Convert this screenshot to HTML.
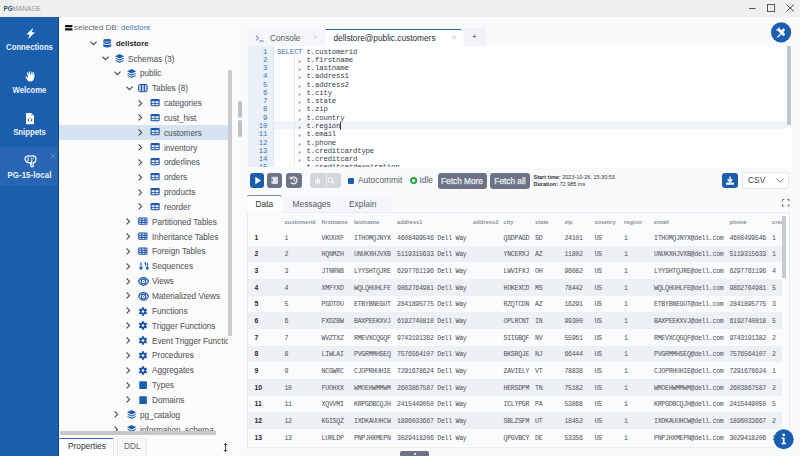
<!DOCTYPE html><html><head><meta charset="utf-8"><style>
*{box-sizing:border-box;margin:0;padding:0}
html,body{width:800px;height:456px;overflow:hidden;background:#fafbfd;font-family:"Liberation Sans",sans-serif;}
.a{position:absolute}
.t{position:absolute;white-space:nowrap}
svg{position:absolute;overflow:visible}
.sans{font-family:"Liberation Sans",sans-serif;letter-spacing:0}
</style></head><body><div class="a" style="left:0;top:0;width:800px;height:17px;background:#efefef"></div>
<div class="t" style="left:3.6px;top:5px;font-size:6.3px;line-height:7px;font-weight:bold;color:#24505f">PG<span style="font-weight:normal;color:#8c9196;letter-spacing:0.12px">MANAGE</span></div>
<svg style="left:0;top:0" width="800" height="17"><line x1="749" y1="8.5" x2="755.5" y2="8.5" stroke="#555" stroke-width="1"/><rect x="767.5" y="4.5" width="7" height="7" fill="none" stroke="#555" stroke-width="1"/><path d="M786.5 4.5L794 11.5M794 4.5L786.5 11.5" stroke="#444" stroke-width="1"/></svg>
<div class="a" style="left:0;top:17px;width:59px;height:439px;background:#1a5fae"></div>
<div class="a" style="left:57.6px;top:17px;width:1.4px;height:439px;background:#123f80"></div>
<div class="a" style="left:0;top:147px;width:57.5px;height:39px;background:#2866b3"></div>
<div class="t" style="left:0;width:59px;text-align:center;top:42.6px;font-size:8.6px;line-height:9px;font-weight:bold;color:#eef3fb;transform:scaleX(0.9)">Connections</div>
<div class="t" style="left:0;width:59px;text-align:center;top:85.5px;font-size:8.6px;line-height:9px;font-weight:bold;color:#eef3fb;transform:scaleX(0.9)">Welcome</div>
<div class="t" style="left:0;width:59px;text-align:center;top:128.3px;font-size:8.6px;line-height:9px;font-weight:bold;color:#eef3fb;transform:scaleX(0.9)">Snippets</div>
<div class="t" style="left:0;width:59px;text-align:center;top:170.8px;font-size:8.7px;line-height:9px;font-weight:bold;color:#eef3fb;letter-spacing:0.1px;transform:scaleX(0.9)">PG-15-local</div>
<svg style="left:25.5px;top:27.5px" width="9" height="11" viewBox="0 0 9 11"><path d="M6.6 0.4 Q7.2 0.2 7 0.9 L5.4 4.3 L8 4.3 Q8.7 4.4 8.2 5 L2.6 10.5 Q2 10.9 2.2 10.2 L3.7 6.6 L1 6.6 Q0.3 6.5 0.8 5.9 Z" fill="#fff"/></svg>
<svg style="left:24.8px;top:71px" width="10" height="10.5" viewBox="0 0 10 10.5"><path d="M1.2 5.2 Q0.4 4.8 0.3 5.6 L2.6 9.4 Q3.4 10.4 5 10.4 L6.6 10.4 Q8 10.2 8.5 8.8 L9.8 4.2 Q9.8 3.3 9 3.5 L8.3 5.6 L9 1.8 Q9 0.9 8.1 1.1 L7.2 4.5 L7.4 1 Q7.2 0.2 6.5 0.5 L5.9 4.6 L4.6 0.6 Q4.2 -0.1 3.6 0.5 L4.2 4.6 L2.8 1.5 Q2.3 0.9 1.8 1.5 L2.9 5.8 L2.2 7 Z" fill="#fff"/></svg>
<svg style="left:25.8px;top:112.6px" width="8" height="11.3" viewBox="0 0 8 11.3"><path d="M0 1 Q0 0 1 0 L5 0 L8 3 L8 10.3 Q8 11.3 7 11.3 L1 11.3 Q0 11.3 0 10.3 Z" fill="#fff"/><path d="M5 0 L5 3 L8 3" fill="#c9d8ee"/><path d="M3.2 5.4 L2 6.9 L3.2 8.4 M4.8 5.4 L6 6.9 L4.8 8.4" stroke="#174a8c" stroke-width="1" fill="none"/></svg>
<svg style="left:23.8px;top:155.4px" width="13" height="12.5" viewBox="0 0 13 12.5"><path d="M1.4 2.2 Q2.6 0.6 5.2 0.9 Q6.5 1.2 7 1 Q9.8 0.4 11.4 1.8 Q12.6 3.2 11.7 5.8 Q11.2 6.8 10.8 7.3 Q10 7.9 9.3 7.6 L9.2 10.6 Q8.9 12 7.8 11.8 Q6.9 11.6 6.7 10.4 L6.5 7.6 Q4.6 8.3 3.2 7.3 Q1.6 6.3 1.1 4.4 Q0.9 3 1.4 2.2 Z" fill="none" stroke="#fff" stroke-width="1.25"/><path d="M4.3 2.3 L4 6.5 M7 2.5 Q8.2 3 7.8 4.6 L7.6 9.8" stroke="#fff" stroke-width="1" fill="none"/><circle cx="9.4" cy="3.3" r="0.6" fill="#fff"/></svg>
<svg style="left:49.5px;top:152.5px" width="6" height="6"><path d="M0.5 0.5L5.3 5.3M5.3 0.5L0.5 5.3" stroke="#6f98cc" stroke-width="0.8"/></svg>
<div class="a" style="left:59px;top:17px;width:184px;height:421px;background:#fbfbfc"></div>
<div class="t" style="left:74px;top:22.5px;font-size:7.9px;line-height:9px;color:#656a74">selected DB: <span style="color:#4a78bd">dellstore</span></div>
<svg style="left:65px;top:24.5px" width="8" height="6"><rect x="0" y="0" width="7.5" height="2.2" rx="0.6" fill="#111"/><rect x="0" y="3.3" width="7.5" height="2.2" rx="0.6" fill="#111"/></svg>
<div class="a" style="left:59px;top:125px;width:169px;height:15px;background:#d6e3f0"></div>
<div class="a" style="left:59px;top:17px;width:169px;height:414.6px;overflow:hidden"><svg style="margin-left:-59px;margin-top:-17px;left:89.50px;top:41.40px" width="7" height="5"><path d="M0.4 0.6L3.5 3.7L6.6 0.6" stroke="#45484d" stroke-width="1.1" fill="none"/></svg><svg style="margin-left:-59px;margin-top:-17px;left:103.00px;top:39.40px" width="9" height="9" viewBox="0 0 9 9"><ellipse cx="4.2" cy="1.4" rx="4" ry="1.4" fill="#1b5eb0"/><path d="M0.2 2.4 Q4.2 4.4 8.2 2.4 L8.2 4 Q4.2 6 0.2 4 Z" fill="#1b5eb0"/><path d="M0.2 5 Q4.2 7 8.2 5 L8.2 7.2 Q4.2 9.6 0.2 7.2 Z" fill="#1b5eb0"/></svg><div class="t" style="margin-left:-59px;margin-top:-17px;left:116px;top:39.00px;font-size:7.8px;line-height:10px;font-weight:bold;color:#1d1f24">dellstore</div><svg style="margin-left:-59px;margin-top:-17px;left:101.50px;top:56.24px" width="7" height="5"><path d="M0.4 0.6L3.5 3.7L6.6 0.6" stroke="#45484d" stroke-width="1.1" fill="none"/></svg><svg style="margin-left:-59px;margin-top:-17px;left:115.00px;top:54.24px" width="10" height="9" viewBox="0 0 10 9"><path d="M4.6 0 L9.2 2.2 L4.6 4.4 L0 2.2 Z" fill="#1b5eb0"/><path d="M1.2 3.9 L4.6 5.5 L8 3.9 L9.2 4.5 L4.6 6.7 L0 4.5 Z" fill="#1b5eb0"/><path d="M1.2 6.2 L4.6 7.8 L8 6.2 L9.2 6.8 L4.6 9 L0 6.8 Z" fill="#1b5eb0"/></svg><div class="t" style="margin-left:-59px;margin-top:-17px;left:128px;top:54.54px;font-size:8.2px;line-height:10px;color:#585b61;-webkit-text-stroke:0.08px #585b61">Schemas (3)</div><svg style="margin-left:-59px;margin-top:-17px;left:113.50px;top:71.08px" width="7" height="5"><path d="M0.4 0.6L3.5 3.7L6.6 0.6" stroke="#45484d" stroke-width="1.1" fill="none"/></svg><svg style="margin-left:-59px;margin-top:-17px;left:127.00px;top:69.08px" width="10" height="9" viewBox="0 0 10 9"><path d="M4.6 0 L9.2 2.2 L4.6 4.4 L0 2.2 Z" fill="#1b5eb0"/><path d="M1.2 3.9 L4.6 5.5 L8 3.9 L9.2 4.5 L4.6 6.7 L0 4.5 Z" fill="#1b5eb0"/><path d="M1.2 6.2 L4.6 7.8 L8 6.2 L9.2 6.8 L4.6 9 L0 6.8 Z" fill="#1b5eb0"/></svg><div class="t" style="margin-left:-59px;margin-top:-17px;left:140px;top:69.38px;font-size:8.2px;line-height:10px;color:#585b61;-webkit-text-stroke:0.08px #585b61">public</div><svg style="margin-left:-59px;margin-top:-17px;left:125.50px;top:85.92px" width="7" height="5"><path d="M0.4 0.6L3.5 3.7L6.6 0.6" stroke="#45484d" stroke-width="1.1" fill="none"/></svg><svg style="margin-left:-59px;margin-top:-17px;left:139.00px;top:83.92px" width="10" height="9" viewBox="0 0 10 9"><rect x="-0.4" y="0.5" width="8.6" height="7.2" rx="1.2" fill="#b3cbef" stroke="#2a5aa6" stroke-width="1"/><path d="M2.55 0.8V7.4M5.35 0.8V7.4" stroke="#1d4f9c" stroke-width="1"/></svg><div class="t" style="margin-left:-59px;margin-top:-17px;left:152px;top:84.22px;font-size:8.2px;line-height:10px;color:#585b61;-webkit-text-stroke:0.08px #585b61">Tables (8)</div><svg style="margin-left:-59px;margin-top:-17px;left:138.00px;top:99.56px" width="5" height="8"><path d="M0.6 0.5L3.6 3.4L0.6 6.3" stroke="#45484d" stroke-width="1.05" fill="none"/></svg><svg style="margin-left:-59px;margin-top:-17px;left:151.00px;top:98.76px" width="10" height="8" viewBox="0 0 10 8"><rect x="-0.5" y="0" width="9.2" height="7.2" rx="1.1" fill="#1d56a8"/><g fill="#e4edf9"><rect x="0.6" y="2.2" width="3.1" height="1.8"/><rect x="4.5" y="2.2" width="3.1" height="1.8"/><rect x="0.6" y="4.8" width="3.1" height="1.4"/><rect x="4.5" y="4.8" width="3.1" height="1.4"/></g></svg><div class="t" style="margin-left:-59px;margin-top:-17px;left:164px;top:99.06px;font-size:8.2px;line-height:10px;color:#585b61;-webkit-text-stroke:0.08px #585b61">categories</div><svg style="margin-left:-59px;margin-top:-17px;left:138.00px;top:114.40px" width="5" height="8"><path d="M0.6 0.5L3.6 3.4L0.6 6.3" stroke="#45484d" stroke-width="1.05" fill="none"/></svg><svg style="margin-left:-59px;margin-top:-17px;left:151.00px;top:113.60px" width="10" height="8" viewBox="0 0 10 8"><rect x="-0.5" y="0" width="9.2" height="7.2" rx="1.1" fill="#1d56a8"/><g fill="#e4edf9"><rect x="0.6" y="2.2" width="3.1" height="1.8"/><rect x="4.5" y="2.2" width="3.1" height="1.8"/><rect x="0.6" y="4.8" width="3.1" height="1.4"/><rect x="4.5" y="4.8" width="3.1" height="1.4"/></g></svg><div class="t" style="margin-left:-59px;margin-top:-17px;left:164px;top:113.90px;font-size:8.2px;line-height:10px;color:#585b61;-webkit-text-stroke:0.08px #585b61">cust_hist</div><svg style="margin-left:-59px;margin-top:-17px;left:138.00px;top:129.24px" width="5" height="8"><path d="M0.6 0.5L3.6 3.4L0.6 6.3" stroke="#45484d" stroke-width="1.05" fill="none"/></svg><svg style="margin-left:-59px;margin-top:-17px;left:151.00px;top:128.44px" width="10" height="8" viewBox="0 0 10 8"><rect x="-0.5" y="0" width="9.2" height="7.2" rx="1.1" fill="#1d56a8"/><g fill="#e4edf9"><rect x="0.6" y="2.2" width="3.1" height="1.8"/><rect x="4.5" y="2.2" width="3.1" height="1.8"/><rect x="0.6" y="4.8" width="3.1" height="1.4"/><rect x="4.5" y="4.8" width="3.1" height="1.4"/></g></svg><div class="t" style="margin-left:-59px;margin-top:-17px;left:164px;top:128.74px;font-size:8.2px;line-height:10px;color:#585b61;-webkit-text-stroke:0.08px #585b61">customers</div><svg style="margin-left:-59px;margin-top:-17px;left:138.00px;top:144.08px" width="5" height="8"><path d="M0.6 0.5L3.6 3.4L0.6 6.3" stroke="#45484d" stroke-width="1.05" fill="none"/></svg><svg style="margin-left:-59px;margin-top:-17px;left:151.00px;top:143.28px" width="10" height="8" viewBox="0 0 10 8"><rect x="-0.5" y="0" width="9.2" height="7.2" rx="1.1" fill="#1d56a8"/><g fill="#e4edf9"><rect x="0.6" y="2.2" width="3.1" height="1.8"/><rect x="4.5" y="2.2" width="3.1" height="1.8"/><rect x="0.6" y="4.8" width="3.1" height="1.4"/><rect x="4.5" y="4.8" width="3.1" height="1.4"/></g></svg><div class="t" style="margin-left:-59px;margin-top:-17px;left:164px;top:143.58px;font-size:8.2px;line-height:10px;color:#585b61;-webkit-text-stroke:0.08px #585b61">inventory</div><svg style="margin-left:-59px;margin-top:-17px;left:138.00px;top:158.92px" width="5" height="8"><path d="M0.6 0.5L3.6 3.4L0.6 6.3" stroke="#45484d" stroke-width="1.05" fill="none"/></svg><svg style="margin-left:-59px;margin-top:-17px;left:151.00px;top:158.12px" width="10" height="8" viewBox="0 0 10 8"><rect x="-0.5" y="0" width="9.2" height="7.2" rx="1.1" fill="#1d56a8"/><g fill="#e4edf9"><rect x="0.6" y="2.2" width="3.1" height="1.8"/><rect x="4.5" y="2.2" width="3.1" height="1.8"/><rect x="0.6" y="4.8" width="3.1" height="1.4"/><rect x="4.5" y="4.8" width="3.1" height="1.4"/></g></svg><div class="t" style="margin-left:-59px;margin-top:-17px;left:164px;top:158.42px;font-size:8.2px;line-height:10px;color:#585b61;-webkit-text-stroke:0.08px #585b61">orderlines</div><svg style="margin-left:-59px;margin-top:-17px;left:138.00px;top:173.76px" width="5" height="8"><path d="M0.6 0.5L3.6 3.4L0.6 6.3" stroke="#45484d" stroke-width="1.05" fill="none"/></svg><svg style="margin-left:-59px;margin-top:-17px;left:151.00px;top:172.96px" width="10" height="8" viewBox="0 0 10 8"><rect x="-0.5" y="0" width="9.2" height="7.2" rx="1.1" fill="#1d56a8"/><g fill="#e4edf9"><rect x="0.6" y="2.2" width="3.1" height="1.8"/><rect x="4.5" y="2.2" width="3.1" height="1.8"/><rect x="0.6" y="4.8" width="3.1" height="1.4"/><rect x="4.5" y="4.8" width="3.1" height="1.4"/></g></svg><div class="t" style="margin-left:-59px;margin-top:-17px;left:164px;top:173.26px;font-size:8.2px;line-height:10px;color:#585b61;-webkit-text-stroke:0.08px #585b61">orders</div><svg style="margin-left:-59px;margin-top:-17px;left:138.00px;top:188.60px" width="5" height="8"><path d="M0.6 0.5L3.6 3.4L0.6 6.3" stroke="#45484d" stroke-width="1.05" fill="none"/></svg><svg style="margin-left:-59px;margin-top:-17px;left:151.00px;top:187.80px" width="10" height="8" viewBox="0 0 10 8"><rect x="-0.5" y="0" width="9.2" height="7.2" rx="1.1" fill="#1d56a8"/><g fill="#e4edf9"><rect x="0.6" y="2.2" width="3.1" height="1.8"/><rect x="4.5" y="2.2" width="3.1" height="1.8"/><rect x="0.6" y="4.8" width="3.1" height="1.4"/><rect x="4.5" y="4.8" width="3.1" height="1.4"/></g></svg><div class="t" style="margin-left:-59px;margin-top:-17px;left:164px;top:188.10px;font-size:8.2px;line-height:10px;color:#585b61;-webkit-text-stroke:0.08px #585b61">products</div><svg style="margin-left:-59px;margin-top:-17px;left:138.00px;top:203.44px" width="5" height="8"><path d="M0.6 0.5L3.6 3.4L0.6 6.3" stroke="#45484d" stroke-width="1.05" fill="none"/></svg><svg style="margin-left:-59px;margin-top:-17px;left:151.00px;top:202.64px" width="10" height="8" viewBox="0 0 10 8"><rect x="-0.5" y="0" width="9.2" height="7.2" rx="1.1" fill="#1d56a8"/><g fill="#e4edf9"><rect x="0.6" y="2.2" width="3.1" height="1.8"/><rect x="4.5" y="2.2" width="3.1" height="1.8"/><rect x="0.6" y="4.8" width="3.1" height="1.4"/><rect x="4.5" y="4.8" width="3.1" height="1.4"/></g></svg><div class="t" style="margin-left:-59px;margin-top:-17px;left:164px;top:202.94px;font-size:8.2px;line-height:10px;color:#585b61;-webkit-text-stroke:0.08px #585b61">reorder</div><svg style="margin-left:-59px;margin-top:-17px;left:126.00px;top:218.28px" width="5" height="8"><path d="M0.6 0.5L3.6 3.4L0.6 6.3" stroke="#45484d" stroke-width="1.05" fill="none"/></svg><svg style="margin-left:-59px;margin-top:-17px;left:139.00px;top:217.48px" width="10" height="9" viewBox="0 0 10 9"><rect x="-0.8" y="0.4" width="9.3" height="7.4" rx="1" fill="#1d56a8"/><g fill="#c4d7f2"><rect x="0.2" y="1.4" width="2.1" height="1.4"/><rect x="3.3" y="1.4" width="2.1" height="1.4"/><rect x="6.4" y="1.4" width="1.2" height="1.4"/><rect x="0.2" y="3.7" width="2.1" height="1.4"/><rect x="3.3" y="3.7" width="2.1" height="1.4"/><rect x="6.4" y="3.7" width="1.2" height="1.4"/><rect x="0.2" y="6" width="2.1" height="1"/><rect x="3.3" y="6" width="2.1" height="1"/><rect x="6.4" y="6" width="1.2" height="1"/></g></svg><div class="t" style="margin-left:-59px;margin-top:-17px;left:152px;top:217.78px;font-size:8.2px;line-height:10px;color:#585b61;-webkit-text-stroke:0.08px #585b61">Partitioned Tables</div><svg style="margin-left:-59px;margin-top:-17px;left:126.00px;top:233.12px" width="5" height="8"><path d="M0.6 0.5L3.6 3.4L0.6 6.3" stroke="#45484d" stroke-width="1.05" fill="none"/></svg><svg style="margin-left:-59px;margin-top:-17px;left:139.00px;top:232.32px" width="10" height="9" viewBox="0 0 10 9"><rect x="-0.8" y="0.4" width="9.3" height="7.4" rx="1" fill="#1d56a8"/><g fill="#c4d7f2"><rect x="0.2" y="1.4" width="2.1" height="1.4"/><rect x="3.3" y="1.4" width="2.1" height="1.4"/><rect x="6.4" y="1.4" width="1.2" height="1.4"/><rect x="0.2" y="3.7" width="2.1" height="1.4"/><rect x="3.3" y="3.7" width="2.1" height="1.4"/><rect x="6.4" y="3.7" width="1.2" height="1.4"/><rect x="0.2" y="6" width="2.1" height="1"/><rect x="3.3" y="6" width="2.1" height="1"/><rect x="6.4" y="6" width="1.2" height="1"/></g></svg><div class="t" style="margin-left:-59px;margin-top:-17px;left:152px;top:232.62px;font-size:8.2px;line-height:10px;color:#585b61;-webkit-text-stroke:0.08px #585b61">Inheritance Tables</div><svg style="margin-left:-59px;margin-top:-17px;left:126.00px;top:247.96px" width="5" height="8"><path d="M0.6 0.5L3.6 3.4L0.6 6.3" stroke="#45484d" stroke-width="1.05" fill="none"/></svg><svg style="margin-left:-59px;margin-top:-17px;left:139.00px;top:247.16px" width="10" height="9" viewBox="0 0 10 9"><rect x="-0.8" y="0.4" width="9.3" height="7.4" rx="1" fill="#1d56a8"/><g fill="#c4d7f2"><rect x="0.2" y="1.4" width="2.1" height="1.4"/><rect x="3.3" y="1.4" width="2.1" height="1.4"/><rect x="6.4" y="1.4" width="1.2" height="1.4"/><rect x="0.2" y="3.7" width="2.1" height="1.4"/><rect x="3.3" y="3.7" width="2.1" height="1.4"/><rect x="6.4" y="3.7" width="1.2" height="1.4"/><rect x="0.2" y="6" width="2.1" height="1"/><rect x="3.3" y="6" width="2.1" height="1"/><rect x="6.4" y="6" width="1.2" height="1"/></g></svg><div class="t" style="margin-left:-59px;margin-top:-17px;left:152px;top:247.46px;font-size:8.2px;line-height:10px;color:#585b61;-webkit-text-stroke:0.08px #585b61">Foreign Tables</div><svg style="margin-left:-59px;margin-top:-17px;left:126.00px;top:262.80px" width="5" height="8"><path d="M0.6 0.5L3.6 3.4L0.6 6.3" stroke="#45484d" stroke-width="1.05" fill="none"/></svg><svg style="margin-left:-59px;margin-top:-17px;left:139.00px;top:262.00px" width="10" height="8" viewBox="0 0 10 8"><path d="M2 0.3V7M0.3 5.2L2 7.4L3.7 5.2" stroke="#1b5eb0" stroke-width="1.1" fill="none"/><path d="M5.2 1.2L6.5 0.4V3.6" stroke="#1b5eb0" stroke-width="1" fill="none"/><path d="M8.3 1V7M6.8 5.3L8.3 7.3L9.8 5.3" stroke="#1b5eb0" stroke-width="1.1" fill="none"/></svg><div class="t" style="margin-left:-59px;margin-top:-17px;left:152px;top:262.30px;font-size:8.2px;line-height:10px;color:#585b61;-webkit-text-stroke:0.08px #585b61">Sequences</div><svg style="margin-left:-59px;margin-top:-17px;left:126.00px;top:277.64px" width="5" height="8"><path d="M0.6 0.5L3.6 3.4L0.6 6.3" stroke="#45484d" stroke-width="1.05" fill="none"/></svg><svg style="margin-left:-59px;margin-top:-17px;left:139.00px;top:276.84px" width="11" height="10" viewBox="0 0 11 10"><path d="M-0.4 4.4 C1.4 -0.6 7.6 -0.6 9.4 4.4 C7.6 9.4 1.4 9.4 -0.4 4.4 Z" fill="none" stroke="#1d56a8" stroke-width="1.25"/><circle cx="4.5" cy="4.4" r="2.3" fill="none" stroke="#1d56a8" stroke-width="1.15"/><path d="M4.1 4.8 L5.3 3.5" stroke="#1d56a8" stroke-width="1"/></svg><div class="t" style="margin-left:-59px;margin-top:-17px;left:152px;top:277.14px;font-size:8.2px;line-height:10px;color:#585b61;-webkit-text-stroke:0.08px #585b61">Views</div><svg style="margin-left:-59px;margin-top:-17px;left:126.00px;top:292.48px" width="5" height="8"><path d="M0.6 0.5L3.6 3.4L0.6 6.3" stroke="#45484d" stroke-width="1.05" fill="none"/></svg><svg style="margin-left:-59px;margin-top:-17px;left:139.00px;top:291.68px" width="11" height="10" viewBox="0 0 11 10"><path d="M-0.4 4.4 C1.4 -0.6 7.6 -0.6 9.4 4.4 C7.6 9.4 1.4 9.4 -0.4 4.4 Z" fill="none" stroke="#1d56a8" stroke-width="1.25"/><circle cx="4.5" cy="4.4" r="2.3" fill="none" stroke="#1d56a8" stroke-width="1.15"/><path d="M4.1 4.8 L5.3 3.5" stroke="#1d56a8" stroke-width="1"/></svg><div class="t" style="margin-left:-59px;margin-top:-17px;left:152px;top:291.98px;font-size:8.2px;line-height:10px;color:#585b61;-webkit-text-stroke:0.08px #585b61">Materialized Views</div><svg style="margin-left:-59px;margin-top:-17px;left:126.00px;top:307.32px" width="5" height="8"><path d="M0.6 0.5L3.6 3.4L0.6 6.3" stroke="#45484d" stroke-width="1.05" fill="none"/></svg><svg style="margin-left:-59px;margin-top:-17px;left:139.00px;top:306.52px" width="9" height="9" viewBox="-4 -4.5 9 9"><g fill="#1d56a8"><circle r="3"/><rect x="-1.1" y="-4.3" width="2.2" height="8.6" rx="0.5"/><rect x="-1.1" y="-4.3" width="2.2" height="8.6" rx="0.5" transform="rotate(60)"/><rect x="-1.1" y="-4.3" width="2.2" height="8.6" rx="0.5" transform="rotate(120)"/></g><circle r="1.2" fill="#fbfbfc"/></svg><div class="t" style="margin-left:-59px;margin-top:-17px;left:152px;top:306.82px;font-size:8.2px;line-height:10px;color:#585b61;-webkit-text-stroke:0.08px #585b61">Functions</div><svg style="margin-left:-59px;margin-top:-17px;left:126.00px;top:322.16px" width="5" height="8"><path d="M0.6 0.5L3.6 3.4L0.6 6.3" stroke="#45484d" stroke-width="1.05" fill="none"/></svg><svg style="margin-left:-59px;margin-top:-17px;left:139.00px;top:321.36px" width="9" height="9" viewBox="-4 -4.5 9 9"><g fill="#1d56a8"><circle r="3"/><rect x="-1.1" y="-4.3" width="2.2" height="8.6" rx="0.5"/><rect x="-1.1" y="-4.3" width="2.2" height="8.6" rx="0.5" transform="rotate(60)"/><rect x="-1.1" y="-4.3" width="2.2" height="8.6" rx="0.5" transform="rotate(120)"/></g><circle r="1.2" fill="#fbfbfc"/></svg><div class="t" style="margin-left:-59px;margin-top:-17px;left:152px;top:321.66px;font-size:8.2px;line-height:10px;color:#585b61;-webkit-text-stroke:0.08px #585b61">Trigger Functions</div><svg style="margin-left:-59px;margin-top:-17px;left:126.00px;top:337.00px" width="5" height="8"><path d="M0.6 0.5L3.6 3.4L0.6 6.3" stroke="#45484d" stroke-width="1.05" fill="none"/></svg><svg style="margin-left:-59px;margin-top:-17px;left:139.00px;top:336.20px" width="9" height="9" viewBox="-4 -4.5 9 9"><g fill="#1d56a8"><circle r="3"/><rect x="-1.1" y="-4.3" width="2.2" height="8.6" rx="0.5"/><rect x="-1.1" y="-4.3" width="2.2" height="8.6" rx="0.5" transform="rotate(60)"/><rect x="-1.1" y="-4.3" width="2.2" height="8.6" rx="0.5" transform="rotate(120)"/></g><circle r="1.2" fill="#fbfbfc"/></svg><div class="t" style="margin-left:-59px;margin-top:-17px;left:152px;top:336.50px;font-size:8.2px;line-height:10px;color:#585b61;-webkit-text-stroke:0.08px #585b61">Event Trigger Functio</div><svg style="margin-left:-59px;margin-top:-17px;left:126.00px;top:351.84px" width="5" height="8"><path d="M0.6 0.5L3.6 3.4L0.6 6.3" stroke="#45484d" stroke-width="1.05" fill="none"/></svg><svg style="margin-left:-59px;margin-top:-17px;left:139.00px;top:351.04px" width="9" height="9" viewBox="-4 -4.5 9 9"><g fill="#1d56a8"><circle r="3"/><rect x="-1.1" y="-4.3" width="2.2" height="8.6" rx="0.5"/><rect x="-1.1" y="-4.3" width="2.2" height="8.6" rx="0.5" transform="rotate(60)"/><rect x="-1.1" y="-4.3" width="2.2" height="8.6" rx="0.5" transform="rotate(120)"/></g><circle r="1.2" fill="#fbfbfc"/></svg><div class="t" style="margin-left:-59px;margin-top:-17px;left:152px;top:351.34px;font-size:8.2px;line-height:10px;color:#585b61;-webkit-text-stroke:0.08px #585b61">Procedures</div><svg style="margin-left:-59px;margin-top:-17px;left:126.00px;top:366.68px" width="5" height="8"><path d="M0.6 0.5L3.6 3.4L0.6 6.3" stroke="#45484d" stroke-width="1.05" fill="none"/></svg><svg style="margin-left:-59px;margin-top:-17px;left:139.00px;top:365.88px" width="9" height="9" viewBox="-4 -4.5 9 9"><g fill="#1d56a8"><circle r="3"/><rect x="-1.1" y="-4.3" width="2.2" height="8.6" rx="0.5"/><rect x="-1.1" y="-4.3" width="2.2" height="8.6" rx="0.5" transform="rotate(60)"/><rect x="-1.1" y="-4.3" width="2.2" height="8.6" rx="0.5" transform="rotate(120)"/></g><circle r="1.2" fill="#fbfbfc"/></svg><div class="t" style="margin-left:-59px;margin-top:-17px;left:152px;top:366.18px;font-size:8.2px;line-height:10px;color:#585b61;-webkit-text-stroke:0.08px #585b61">Aggregates</div><svg style="margin-left:-59px;margin-top:-17px;left:126.00px;top:381.52px" width="5" height="8"><path d="M0.6 0.5L3.6 3.4L0.6 6.3" stroke="#45484d" stroke-width="1.05" fill="none"/></svg><svg style="margin-left:-59px;margin-top:-17px;left:139.00px;top:380.72px" width="9" height="9"><rect x="0.3" y="0.3" width="7.6" height="7.6" rx="0.6" fill="#1b5eb0"/></svg><div class="t" style="margin-left:-59px;margin-top:-17px;left:152px;top:381.02px;font-size:8.2px;line-height:10px;color:#585b61;-webkit-text-stroke:0.08px #585b61">Types</div><svg style="margin-left:-59px;margin-top:-17px;left:126.00px;top:396.36px" width="5" height="8"><path d="M0.6 0.5L3.6 3.4L0.6 6.3" stroke="#45484d" stroke-width="1.05" fill="none"/></svg><svg style="margin-left:-59px;margin-top:-17px;left:139.00px;top:395.56px" width="9" height="9"><rect x="0.3" y="0.3" width="7.6" height="7.6" rx="0.6" fill="#1b5eb0"/></svg><div class="t" style="margin-left:-59px;margin-top:-17px;left:152px;top:395.86px;font-size:8.2px;line-height:10px;color:#585b61;-webkit-text-stroke:0.08px #585b61">Domains</div><svg style="margin-left:-59px;margin-top:-17px;left:114.00px;top:411.20px" width="5" height="8"><path d="M0.6 0.5L3.6 3.4L0.6 6.3" stroke="#45484d" stroke-width="1.05" fill="none"/></svg><svg style="margin-left:-59px;margin-top:-17px;left:127.00px;top:410.40px" width="10" height="9" viewBox="0 0 10 9"><path d="M4.6 0 L9.2 2.2 L4.6 4.4 L0 2.2 Z" fill="#1b5eb0"/><path d="M1.2 3.9 L4.6 5.5 L8 3.9 L9.2 4.5 L4.6 6.7 L0 4.5 Z" fill="#1b5eb0"/><path d="M1.2 6.2 L4.6 7.8 L8 6.2 L9.2 6.8 L4.6 9 L0 6.8 Z" fill="#1b5eb0"/></svg><div class="t" style="margin-left:-59px;margin-top:-17px;left:140px;top:410.70px;font-size:8.2px;line-height:10px;color:#585b61;-webkit-text-stroke:0.08px #585b61">pg_catalog</div><svg style="margin-left:-59px;margin-top:-17px;left:114.00px;top:426.04px" width="5" height="8"><path d="M0.6 0.5L3.6 3.4L0.6 6.3" stroke="#45484d" stroke-width="1.05" fill="none"/></svg><svg style="margin-left:-59px;margin-top:-17px;left:127.00px;top:425.24px" width="10" height="9" viewBox="0 0 10 9"><path d="M4.6 0 L9.2 2.2 L4.6 4.4 L0 2.2 Z" fill="#1b5eb0"/><path d="M1.2 3.9 L4.6 5.5 L8 3.9 L9.2 4.5 L4.6 6.7 L0 4.5 Z" fill="#1b5eb0"/><path d="M1.2 6.2 L4.6 7.8 L8 6.2 L9.2 6.8 L4.6 9 L0 6.8 Z" fill="#1b5eb0"/></svg><div class="t" style="margin-left:-59px;margin-top:-17px;left:140px;top:425.54px;font-size:8.2px;line-height:10px;color:#585b61;-webkit-text-stroke:0.08px #585b61">information_schema</div></div>
<div class="a" style="left:228.4px;top:69.5px;width:3.4px;height:266px;background:#c9cbcf;border-radius:1px"></div>
<div class="a" style="left:59.5px;top:431.4px;width:156px;height:3.4px;background:#c5c7cb"></div>
<div class="a" style="left:59px;top:438px;width:184px;height:18px;background:#fbfbfc"></div>
<div class="a" style="left:59px;top:437.5px;width:54.5px;height:19px;background:#fdfeff;border-top:1.2px solid #2f6bb0;border-right:1px solid #e6e8ec;border-radius:2px 2px 0 0"></div>
<div class="t" style="left:68px;top:442px;font-size:8.3px;line-height:9px;color:#333">Properties</div>
<div class="a" style="left:117px;top:438px;width:30px;height:18px;background:#f7f8fa;border:1px solid #e6e8ec;border-bottom:none;border-radius:3px 3px 0 0"></div>
<div class="t" style="left:124px;top:442px;font-size:8.3px;line-height:9px;color:#666">DDL</div>
<svg style="left:223px;top:443px" width="5" height="9"><path d="M2.5 0.5V8.5M0.8 2.2L2.5 0.5L4.2 2.2M0.8 6.8L2.5 8.5L4.2 6.8" stroke="#333" stroke-width="0.9" fill="none"/></svg>
<div class="a" style="left:240px;top:17px;width:560px;height:439px;background:#f8fafc"></div>
<div class="a" style="left:238.2px;top:101.2px;width:3.6px;height:17.3px;background:#bfc1c6;border-radius:1.8px"></div>
<div class="a" style="left:238.2px;top:119.6px;width:3.6px;height:17.2px;background:#bfc1c6;border-radius:1.8px"></div>
<div class="a" style="left:247.5px;top:29px;width:77px;height:17px;background:#f5f6f9;border-radius:2px 2px 0 0"></div>
<svg style="left:255px;top:34.5px" width="10" height="7"><path d="M0.8 0.6L3.6 3.1L0.8 5.6" stroke="#5660b5" stroke-width="0.95" fill="none"/><path d="M4.3 6H8.6" stroke="#5660b5" stroke-width="0.85"/></svg>
<div class="t" style="left:270px;top:34px;font-size:8.3px;line-height:9px;color:#56595f">Console</div>
<svg style="left:313px;top:35px" width="5" height="5"><path d="M0.5 0.5L4 4M4 0.5L0.5 4" stroke="#c9ccd2" stroke-width="0.8"/></svg>
<div class="a" style="left:324.5px;top:28.5px;width:137px;height:17.5px;background:#fdfeff;border-top:1.5px solid #2a6aa8;border-radius:2px 2px 0 0"></div>
<div class="t" style="left:333.5px;top:34px;font-size:8.3px;line-height:9px;color:#2b2e34">dellstore@public.customers</div>
<svg style="left:451.5px;top:35px" width="5" height="5"><path d="M0.5 0.5L4 4M4 0.5L0.5 4" stroke="#eba3ab" stroke-width="0.8"/></svg>
<div class="a" style="left:464px;top:28px;width:22px;height:18px;background:#f1f3f6;border-radius:2px 2px 0 0"></div>
<div class="t" style="left:472px;top:32px;font-size:8px;line-height:9px;color:#333">+</div>
<svg style="left:770px;top:21.5px" width="22" height="22"><circle cx="11.1" cy="10.4" r="10.1" fill="#1b5eb0"/><g fill="#fff"><path d="M7.3 14.6 L11.6 10.3 L12.4 11.1 L8.1 15.4 Q7.6 15.8 7.1 15.3 Q6.8 14.9 7.3 14.6Z"/><path d="M13.6 6.2 L15.3 7.9 L13.2 10 L14.6 11.4 L15 12.8 L13.9 13.9 L12.5 13.5 L7.6 8.6 Q6.2 8.8 6.4 7.4 L7.1 6.7 L7.9 7.4 L8.6 6.8 L7.9 6.1 L8.6 5.4 Q10 5.3 9.8 6.7 L11.5 8.3 Z"/></g></svg>
<div class="a" style="left:247.5px;top:46px;width:544px;height:120.5px;background:#fcfdff"></div>
<div class="a" style="left:247.5px;top:46px;width:26.5px;height:120.5px;background:#e9f0f8;border-right:1px solid #dbe4ef"></div>
<div class="a" style="left:274px;top:121.3px;width:513px;height:8.2px;background:#f0f4f9"></div>
<div class="a" style="left:293.5px;top:55px;width:0.8px;height:111px;background:#e6e8ec"></div>
<div class="a" style="left:787px;top:46px;width:4px;height:79px;background:#c3c6cb"></div>
<div class="a" style="left:0;top:0;width:800px;height:166.5px;overflow:hidden;font-family:'Liberation Mono',monospace;font-size:7.3px;letter-spacing:-0.16px;color:#3b3f47;white-space:pre"><div class="t" style="left:277px;top:47.60px;height:8.27px;line-height:8.27px;white-space:pre"><span style="color:#4a6fb5">SELECT</span> t.customerid</div><div class="t" style="left:277px;top:55.87px;height:8.27px;line-height:8.27px;white-space:pre">     , t.firstname</div><div class="t" style="left:277px;top:64.14px;height:8.27px;line-height:8.27px;white-space:pre">     , t.lastname</div><div class="t" style="left:277px;top:72.41px;height:8.27px;line-height:8.27px;white-space:pre">     , t.address1</div><div class="t" style="left:277px;top:80.68px;height:8.27px;line-height:8.27px;white-space:pre">     , t.address2</div><div class="t" style="left:277px;top:88.95px;height:8.27px;line-height:8.27px;white-space:pre">     , t.city</div><div class="t" style="left:277px;top:97.22px;height:8.27px;line-height:8.27px;white-space:pre">     , t.state</div><div class="t" style="left:277px;top:105.49px;height:8.27px;line-height:8.27px;white-space:pre">     , t.zip</div><div class="t" style="left:277px;top:113.76px;height:8.27px;line-height:8.27px;white-space:pre">     , t.country</div><div class="t" style="left:277px;top:122.03px;height:8.27px;line-height:8.27px;white-space:pre">     , t.region</div><div class="t" style="left:277px;top:130.30px;height:8.27px;line-height:8.27px;white-space:pre">     , t.email</div><div class="t" style="left:277px;top:138.57px;height:8.27px;line-height:8.27px;white-space:pre">     , t.phone</div><div class="t" style="left:277px;top:146.84px;height:8.27px;line-height:8.27px;white-space:pre">     , t.creditcardtype</div><div class="t" style="left:277px;top:155.11px;height:8.27px;line-height:8.27px;white-space:pre">     , t.creditcard</div><div class="t" style="left:277px;top:163.38px;height:8.27px;line-height:8.27px;white-space:pre">     , t.creditcardexpiration</div></div>
<div class="a" style="left:0;top:0;width:800px;height:166.5px;overflow:hidden;font-family:'Liberation Mono',monospace;font-size:7.4px;color:#4272b8"><div class="t" style="left:247.5px;width:20px;text-align:right;top:47.60px;line-height:8.27px">1</div><div class="t" style="left:247.5px;width:20px;text-align:right;top:55.87px;line-height:8.27px">2</div><div class="t" style="left:247.5px;width:20px;text-align:right;top:64.14px;line-height:8.27px">3</div><div class="t" style="left:247.5px;width:20px;text-align:right;top:72.41px;line-height:8.27px">4</div><div class="t" style="left:247.5px;width:20px;text-align:right;top:80.68px;line-height:8.27px">5</div><div class="t" style="left:247.5px;width:20px;text-align:right;top:88.95px;line-height:8.27px">6</div><div class="t" style="left:247.5px;width:20px;text-align:right;top:97.22px;line-height:8.27px">7</div><div class="t" style="left:247.5px;width:20px;text-align:right;top:105.49px;line-height:8.27px">8</div><div class="t" style="left:247.5px;width:20px;text-align:right;top:113.76px;line-height:8.27px">9</div><div class="t" style="left:247.5px;width:20px;text-align:right;top:122.03px;line-height:8.27px">10</div><div class="t" style="left:247.5px;width:20px;text-align:right;top:130.30px;line-height:8.27px">11</div><div class="t" style="left:247.5px;width:20px;text-align:right;top:138.57px;line-height:8.27px">12</div><div class="t" style="left:247.5px;width:20px;text-align:right;top:146.84px;line-height:8.27px">13</div><div class="t" style="left:247.5px;width:20px;text-align:right;top:155.11px;line-height:8.27px">14</div><div class="t" style="left:247.5px;width:20px;text-align:right;top:163.38px;line-height:8.27px">15</div></div>
<div class="a" style="left:339.5px;top:121.5px;width:0.9px;height:8px;background:#2a3a58"></div>
<div class="a" style="left:249.5px;top:173px;width:14.5px;height:15px;background:#1b5eb0;border-radius:3px"></div>
<svg style="left:249.5px;top:173px" width="15" height="15"><path d="M5.6 4.3L10.6 7.5L5.6 10.7Z" fill="#fff" stroke="#fff" stroke-width="0.6" stroke-linejoin="round"/></svg>
<div class="a" style="left:267px;top:173px;width:15px;height:15px;background:#6c7387;border-radius:3px"></div>
<svg style="left:267px;top:173px" width="15" height="15"><rect x="4.5" y="3.8" width="6.3" height="7.2" fill="#dfe2e9"/><path d="M4.5 4.6H5.8M4.5 10.2H5.8" stroke="#9aa0ad" stroke-width="0.8"/><circle cx="5.2" cy="7.1" r="0.8" fill="#3b3f4a"/></svg>
<div class="a" style="left:285.5px;top:173px;width:16.5px;height:15px;background:#6c7387;border-radius:3px"></div>
<svg style="left:285.5px;top:173px" width="16" height="15"><path d="M5 5.2 A3.4 3.4 0 1 1 4.7 9.3" fill="none" stroke="#fff" stroke-width="1.1"/><path d="M3.6 3.8L4.6 6L6.8 5.4" fill="none" stroke="#fff" stroke-width="1"/><path d="M8 5.6V7.8L9.4 8.8" stroke="#fff" stroke-width="0.9" fill="none"/></svg>
<div class="a" style="left:310px;top:173px;width:31px;height:15px;background:#d3d6dc;border-radius:3px"></div>
<div class="a" style="left:325.5px;top:173px;width:0.8px;height:15px;background:#e6e8eb"></div>
<svg style="left:310px;top:173px" width="31" height="15"><path d="M5.8 10.5V7M7.6 10.5V5M9.4 10.5V6.5" stroke="#fff" stroke-width="1.2"/><circle cx="20.3" cy="6.8" r="2.2" fill="none" stroke="#fff" stroke-width="1"/><path d="M21.9 8.4L23.8 10.3" stroke="#fff" stroke-width="1.2"/></svg>
<div class="a" style="left:348px;top:178px;width:6px;height:6px;background:#1b5eb0;border-radius:1px"></div>
<div class="t" style="left:358px;top:176px;font-size:8.4px;line-height:9px;color:#555b66">Autocommit</div>
<svg style="left:409.5px;top:177px" width="8" height="8"><circle cx="3.6" cy="3.6" r="2.6" fill="#fff" stroke="#23a03a" stroke-width="1.9"/></svg>
<div class="t" style="left:419.5px;top:176px;font-size:8.4px;line-height:9px;color:#555b66">Idle</div>
<div class="a" style="left:437.5px;top:173px;width:49.0px;height:15.5px;background:#6c7387;border-radius:3px"></div>
<div class="t" style="left:437.5px;width:49px;text-align:center;top:176.5px;font-size:8.3px;line-height:9px;-webkit-text-stroke:0.25px #eceef3;color:#eceef3">Fetch More</div>
<div class="a" style="left:490px;top:173px;width:40px;height:15.5px;background:#6c7387;border-radius:3px"></div>
<div class="t" style="left:490px;width:40px;text-align:center;top:176.5px;font-size:8.3px;line-height:9px;-webkit-text-stroke:0.25px #eceef3;color:#eceef3">Fetch all</div>
<div class="t" style="left:533.5px;top:174px;font-size:5.5px;line-height:6px;color:#333"><b>Start time:</b> 2023-10-26, 15:30:53</div>
<div class="t" style="left:533.5px;top:181px;font-size:5.5px;line-height:6px;color:#333"><b>Duration:</b> 72.985 ms</div>
<div class="a" style="left:722px;top:173.2px;width:16.200000000000045px;height:15.0px;background:#1b5eb0;border-radius:3px"></div>
<svg style="left:722px;top:173.2px" width="16" height="15"><path d="M8 3.5V8.5M5.6 6.3L8 8.8L10.4 6.3" stroke="#fff" stroke-width="1.4" fill="none"/><rect x="4" y="9.5" width="8" height="2.2" rx="0.4" fill="#fff"/></svg>
<div class="a" style="left:742.2px;top:171.7px;width:46.5px;height:17.5px;background:#fff;border:1px solid #e4e7eb;border-radius:2px"></div>
<div class="t" style="left:748px;top:176px;font-size:8.4px;line-height:9px;color:#444">CSV</div>
<svg style="left:775.5px;top:178px" width="9" height="6"><path d="M0.5 0.6L4.2 4.3L7.9 0.6" stroke="#666" stroke-width="0.9" fill="none"/></svg>
<div class="a" style="left:247px;top:195px;width:35px;height:16.5px;background:#fdfeff;border-top:1.7px solid #7d89a5;border-radius:2.5px 2.5px 0 0"></div>
<div class="t" style="left:255.5px;top:199.6px;font-size:8.4px;line-height:9px;color:#333">Data</div>
<div class="a" style="left:282px;top:196px;width:110px;height:15.5px;background:#f4f6f9"></div>
<div class="t" style="left:292.5px;top:199.6px;font-size:8.4px;line-height:9px;color:#555b66">Messages</div>
<div class="t" style="left:349px;top:199.6px;font-size:8.4px;line-height:9px;color:#555b66">Explain</div>
<svg style="left:782px;top:198.5px" width="8" height="8"><path d="M0.5 2.3V0.5H2.3M5.2 0.5H7V2.3M7 5.2V7H5.2M2.3 7H0.5V5.2" stroke="#555" stroke-width="0.8" fill="none"/></svg>
<div class="a" style="left:247px;top:211.5px;width:543px;height:236px;background:#f9fbfd;border:1px solid #e6e9ee;border-bottom-color:#eef0f4;border-radius:2px"></div>
<div class="a" style="left:248px;top:211px;width:33.5px;height:2px;background:#fbfcfe"></div>
<div class="a" style="left:0;top:0;width:783px;height:447px;overflow:hidden;font-family:'Liberation Mono',monospace;font-size:6.6px;letter-spacing:-0.3px;color:#4d5058"><div class="t sans" style="left:284.4px;top:219.2px;font-size:5.8px;line-height:7px;font-weight:bold;color:#8d9199">customerid</div><div class="t sans" style="left:321.6px;top:219.2px;font-size:5.8px;line-height:7px;font-weight:bold;color:#8d9199">firstname</div><div class="t sans" style="left:354px;top:219.2px;font-size:5.8px;line-height:7px;font-weight:bold;color:#8d9199">lastname</div><div class="t sans" style="left:397px;top:219.2px;font-size:5.8px;line-height:7px;font-weight:bold;color:#8d9199">address1</div><div class="t sans" style="left:473px;top:219.2px;font-size:5.8px;line-height:7px;font-weight:bold;color:#8d9199">address2</div><div class="t sans" style="left:503.5px;top:219.2px;font-size:5.8px;line-height:7px;font-weight:bold;color:#8d9199">city</div><div class="t sans" style="left:535px;top:219.2px;font-size:5.8px;line-height:7px;font-weight:bold;color:#8d9199">state</div><div class="t sans" style="left:564.4px;top:219.2px;font-size:5.8px;line-height:7px;font-weight:bold;color:#8d9199">zip</div><div class="t sans" style="left:594.4px;top:219.2px;font-size:5.8px;line-height:7px;font-weight:bold;color:#8d9199">country</div><div class="t sans" style="left:624px;top:219.2px;font-size:5.8px;line-height:7px;font-weight:bold;color:#8d9199">region</div><div class="t sans" style="left:654px;top:219.2px;font-size:5.8px;line-height:7px;font-weight:bold;color:#8d9199">email</div><div class="t sans" style="left:729.4px;top:219.2px;font-size:5.8px;line-height:7px;font-weight:bold;color:#8d9199">phone</div><div class="t sans" style="left:772px;top:219.2px;font-size:5.8px;line-height:7px;font-weight:bold;color:#8d9199">creditcardtype</div><div class="t sans" style="left:254.6px;top:233.60px;font-size:6.8px;line-height:7px;font-weight:bold;color:#25272c">1</div><div class="t" style="left:284.4px;top:234.60px;line-height:7px;white-space:pre">1</div><div class="t" style="left:321.6px;top:234.60px;line-height:7px;white-space:pre">VKUUXF</div><div class="t" style="left:354px;top:234.60px;line-height:7px;white-space:pre">ITHOMQJNYX</div><div class="t" style="left:397px;top:234.60px;line-height:7px;white-space:pre">4608499546 Dell Way</div><div class="t" style="left:503.5px;top:234.60px;line-height:7px;white-space:pre">QSDPAGD</div><div class="t" style="left:535px;top:234.60px;line-height:7px;white-space:pre">SD</div><div class="t" style="left:564.4px;top:234.60px;line-height:7px;white-space:pre">24101</div><div class="t" style="left:594.4px;top:234.60px;line-height:7px;white-space:pre">US</div><div class="t" style="left:624px;top:234.60px;line-height:7px;white-space:pre">1</div><div class="t" style="left:654px;top:234.60px;line-height:7px;white-space:pre">ITHOMQJNYX@dell.com</div><div class="t" style="left:729.4px;top:234.60px;line-height:7px;white-space:pre">4608499546</div><div class="t" style="left:772px;top:234.60px;line-height:7px;white-space:pre">1</div><div class="a" style="left:248px;top:245.54px;width:533.5px;height:16.67px;background:#edf1f6"></div><div class="t sans" style="left:254.6px;top:250.27px;font-size:6.8px;line-height:7px;font-weight:bold;color:#25272c">2</div><div class="t" style="left:284.4px;top:251.27px;line-height:7px;white-space:pre">2</div><div class="t" style="left:321.6px;top:251.27px;line-height:7px;white-space:pre">HQNMZH</div><div class="t" style="left:354px;top:251.27px;line-height:7px;white-space:pre">UNUKXHJVXB</div><div class="t" style="left:397px;top:251.27px;line-height:7px;white-space:pre">5119315633 Dell Way</div><div class="t" style="left:503.5px;top:251.27px;line-height:7px;white-space:pre">YNCERXJ</div><div class="t" style="left:535px;top:251.27px;line-height:7px;white-space:pre">AZ</div><div class="t" style="left:564.4px;top:251.27px;line-height:7px;white-space:pre">11802</div><div class="t" style="left:594.4px;top:251.27px;line-height:7px;white-space:pre">US</div><div class="t" style="left:624px;top:251.27px;line-height:7px;white-space:pre">1</div><div class="t" style="left:654px;top:251.27px;line-height:7px;white-space:pre">UNUKXHJVXB@dell.com</div><div class="t" style="left:729.4px;top:251.27px;line-height:7px;white-space:pre">5119315633</div><div class="t" style="left:772px;top:251.27px;line-height:7px;white-space:pre">1</div><div class="t sans" style="left:254.6px;top:266.94px;font-size:6.8px;line-height:7px;font-weight:bold;color:#25272c">3</div><div class="t" style="left:284.4px;top:267.94px;line-height:7px;white-space:pre">3</div><div class="t" style="left:321.6px;top:267.94px;line-height:7px;white-space:pre">JTNRNB</div><div class="t" style="left:354px;top:267.94px;line-height:7px;white-space:pre">LYYSHTQJRE</div><div class="t" style="left:397px;top:267.94px;line-height:7px;white-space:pre">6297761196 Dell Way</div><div class="t" style="left:503.5px;top:267.94px;line-height:7px;white-space:pre">LWVIFXJ</div><div class="t" style="left:535px;top:267.94px;line-height:7px;white-space:pre">OH</div><div class="t" style="left:564.4px;top:267.94px;line-height:7px;white-space:pre">96082</div><div class="t" style="left:594.4px;top:267.94px;line-height:7px;white-space:pre">US</div><div class="t" style="left:624px;top:267.94px;line-height:7px;white-space:pre">1</div><div class="t" style="left:654px;top:267.94px;line-height:7px;white-space:pre">LYYSHTQJRE@dell.com</div><div class="t" style="left:729.4px;top:267.94px;line-height:7px;white-space:pre">6297761196</div><div class="t" style="left:772px;top:267.94px;line-height:7px;white-space:pre">4</div><div class="a" style="left:248px;top:278.88px;width:533.5px;height:16.67px;background:#edf1f6"></div><div class="t sans" style="left:254.6px;top:283.61px;font-size:6.8px;line-height:7px;font-weight:bold;color:#25272c">4</div><div class="t" style="left:284.4px;top:284.61px;line-height:7px;white-space:pre">4</div><div class="t" style="left:321.6px;top:284.61px;line-height:7px;white-space:pre">XMFYXD</div><div class="t" style="left:354px;top:284.61px;line-height:7px;white-space:pre">WQLQHUHLFE</div><div class="t" style="left:397px;top:284.61px;line-height:7px;white-space:pre">9862764981 Dell Way</div><div class="t" style="left:503.5px;top:284.61px;line-height:7px;white-space:pre">HOKEXCD</div><div class="t" style="left:535px;top:284.61px;line-height:7px;white-space:pre">MS</div><div class="t" style="left:564.4px;top:284.61px;line-height:7px;white-space:pre">78442</div><div class="t" style="left:594.4px;top:284.61px;line-height:7px;white-space:pre">US</div><div class="t" style="left:624px;top:284.61px;line-height:7px;white-space:pre">1</div><div class="t" style="left:654px;top:284.61px;line-height:7px;white-space:pre">WQLQHUHLFE@dell.com</div><div class="t" style="left:729.4px;top:284.61px;line-height:7px;white-space:pre">9862764981</div><div class="t" style="left:772px;top:284.61px;line-height:7px;white-space:pre">5</div><div class="t sans" style="left:254.6px;top:300.28px;font-size:6.8px;line-height:7px;font-weight:bold;color:#25272c">5</div><div class="t" style="left:284.4px;top:301.28px;line-height:7px;white-space:pre">5</div><div class="t" style="left:321.6px;top:301.28px;line-height:7px;white-space:pre">PGDTDU</div><div class="t" style="left:354px;top:301.28px;line-height:7px;white-space:pre">ETBYBNEGUT</div><div class="t" style="left:397px;top:301.28px;line-height:7px;white-space:pre">2841895775 Dell Way</div><div class="t" style="left:503.5px;top:301.28px;line-height:7px;white-space:pre">RZQTCDN</div><div class="t" style="left:535px;top:301.28px;line-height:7px;white-space:pre">AZ</div><div class="t" style="left:564.4px;top:301.28px;line-height:7px;white-space:pre">16291</div><div class="t" style="left:594.4px;top:301.28px;line-height:7px;white-space:pre">US</div><div class="t" style="left:624px;top:301.28px;line-height:7px;white-space:pre">1</div><div class="t" style="left:654px;top:301.28px;line-height:7px;white-space:pre">ETBYBNEGUT@dell.com</div><div class="t" style="left:729.4px;top:301.28px;line-height:7px;white-space:pre">2841895775</div><div class="t" style="left:772px;top:301.28px;line-height:7px;white-space:pre">3</div><div class="a" style="left:248px;top:312.22px;width:533.5px;height:16.67px;background:#edf1f6"></div><div class="t sans" style="left:254.6px;top:316.95px;font-size:6.8px;line-height:7px;font-weight:bold;color:#25272c">6</div><div class="t" style="left:284.4px;top:317.95px;line-height:7px;white-space:pre">6</div><div class="t" style="left:321.6px;top:317.95px;line-height:7px;white-space:pre">FXDZBW</div><div class="t" style="left:354px;top:317.95px;line-height:7px;white-space:pre">BAXPEEKXVJ</div><div class="t" style="left:397px;top:317.95px;line-height:7px;white-space:pre">6192740818 Dell Way</div><div class="t" style="left:503.5px;top:317.95px;line-height:7px;white-space:pre">OPLRCNT</div><div class="t" style="left:535px;top:317.95px;line-height:7px;white-space:pre">IN</div><div class="t" style="left:564.4px;top:317.95px;line-height:7px;white-space:pre">99300</div><div class="t" style="left:594.4px;top:317.95px;line-height:7px;white-space:pre">US</div><div class="t" style="left:624px;top:317.95px;line-height:7px;white-space:pre">1</div><div class="t" style="left:654px;top:317.95px;line-height:7px;white-space:pre">BAXPEEKXVJ@dell.com</div><div class="t" style="left:729.4px;top:317.95px;line-height:7px;white-space:pre">6192740818</div><div class="t" style="left:772px;top:317.95px;line-height:7px;white-space:pre">5</div><div class="t sans" style="left:254.6px;top:333.62px;font-size:6.8px;line-height:7px;font-weight:bold;color:#25272c">7</div><div class="t" style="left:284.4px;top:334.62px;line-height:7px;white-space:pre">7</div><div class="t" style="left:321.6px;top:334.62px;line-height:7px;white-space:pre">WVZTXZ</div><div class="t" style="left:354px;top:334.62px;line-height:7px;white-space:pre">RMEVXCQGQF</div><div class="t" style="left:397px;top:334.62px;line-height:7px;white-space:pre">9743191382 Dell Way</div><div class="t" style="left:503.5px;top:334.62px;line-height:7px;white-space:pre">SIIGBQF</div><div class="t" style="left:535px;top:334.62px;line-height:7px;white-space:pre">NV</div><div class="t" style="left:564.4px;top:334.62px;line-height:7px;white-space:pre">55961</div><div class="t" style="left:594.4px;top:334.62px;line-height:7px;white-space:pre">US</div><div class="t" style="left:624px;top:334.62px;line-height:7px;white-space:pre">1</div><div class="t" style="left:654px;top:334.62px;line-height:7px;white-space:pre">RMEVXCQGQF@dell.com</div><div class="t" style="left:729.4px;top:334.62px;line-height:7px;white-space:pre">9743191382</div><div class="t" style="left:772px;top:334.62px;line-height:7px;white-space:pre">2</div><div class="a" style="left:248px;top:345.56px;width:533.5px;height:16.67px;background:#edf1f6"></div><div class="t sans" style="left:254.6px;top:350.29px;font-size:6.8px;line-height:7px;font-weight:bold;color:#25272c">8</div><div class="t" style="left:284.4px;top:351.29px;line-height:7px;white-space:pre">8</div><div class="t" style="left:321.6px;top:351.29px;line-height:7px;white-space:pre">LIWLAI</div><div class="t" style="left:354px;top:351.29px;line-height:7px;white-space:pre">PVGRMMHSEQ</div><div class="t" style="left:397px;top:351.29px;line-height:7px;white-space:pre">7576564107 Dell Way</div><div class="t" style="left:503.5px;top:351.29px;line-height:7px;white-space:pre">BKSRQJE</div><div class="t" style="left:535px;top:351.29px;line-height:7px;white-space:pre">NJ</div><div class="t" style="left:564.4px;top:351.29px;line-height:7px;white-space:pre">66444</div><div class="t" style="left:594.4px;top:351.29px;line-height:7px;white-space:pre">US</div><div class="t" style="left:624px;top:351.29px;line-height:7px;white-space:pre">1</div><div class="t" style="left:654px;top:351.29px;line-height:7px;white-space:pre">PVGRMMHSEQ@dell.com</div><div class="t" style="left:729.4px;top:351.29px;line-height:7px;white-space:pre">7576564107</div><div class="t" style="left:772px;top:351.29px;line-height:7px;white-space:pre">2</div><div class="t sans" style="left:254.6px;top:366.96px;font-size:6.8px;line-height:7px;font-weight:bold;color:#25272c">9</div><div class="t" style="left:284.4px;top:367.96px;line-height:7px;white-space:pre">9</div><div class="t" style="left:321.6px;top:367.96px;line-height:7px;white-space:pre">NCGWRC</div><div class="t" style="left:354px;top:367.96px;line-height:7px;white-space:pre">CJOPRHUHIE</div><div class="t" style="left:397px;top:367.96px;line-height:7px;white-space:pre">7291678624 Dell Way</div><div class="t" style="left:503.5px;top:367.96px;line-height:7px;white-space:pre">ZAVIELY</div><div class="t" style="left:535px;top:367.96px;line-height:7px;white-space:pre">VT</div><div class="t" style="left:564.4px;top:367.96px;line-height:7px;white-space:pre">78838</div><div class="t" style="left:594.4px;top:367.96px;line-height:7px;white-space:pre">US</div><div class="t" style="left:624px;top:367.96px;line-height:7px;white-space:pre">1</div><div class="t" style="left:654px;top:367.96px;line-height:7px;white-space:pre">CJOPRHUHIE@dell.com</div><div class="t" style="left:729.4px;top:367.96px;line-height:7px;white-space:pre">7291678624</div><div class="t" style="left:772px;top:367.96px;line-height:7px;white-space:pre">1</div><div class="a" style="left:248px;top:378.90px;width:533.5px;height:16.67px;background:#edf1f6"></div><div class="t sans" style="left:254.6px;top:383.63px;font-size:6.8px;line-height:7px;font-weight:bold;color:#25272c">10</div><div class="t" style="left:284.4px;top:384.63px;line-height:7px;white-space:pre">10</div><div class="t" style="left:321.6px;top:384.63px;line-height:7px;white-space:pre">FUOHXX</div><div class="t" style="left:354px;top:384.63px;line-height:7px;white-space:pre">WMOEHWMMWM</div><div class="t" style="left:397px;top:384.63px;line-height:7px;white-space:pre">2603867587 Dell Way</div><div class="t" style="left:503.5px;top:384.63px;line-height:7px;white-space:pre">HERSDPM</div><div class="t" style="left:535px;top:384.63px;line-height:7px;white-space:pre">TN</div><div class="t" style="left:564.4px;top:384.63px;line-height:7px;white-space:pre">75182</div><div class="t" style="left:594.4px;top:384.63px;line-height:7px;white-space:pre">US</div><div class="t" style="left:624px;top:384.63px;line-height:7px;white-space:pre">1</div><div class="t" style="left:654px;top:384.63px;line-height:7px;white-space:pre">WMOEHWMMWM@dell.com</div><div class="t" style="left:729.4px;top:384.63px;line-height:7px;white-space:pre">2603867587</div><div class="t" style="left:772px;top:384.63px;line-height:7px;white-space:pre">2</div><div class="t sans" style="left:254.6px;top:400.30px;font-size:6.8px;line-height:7px;font-weight:bold;color:#25272c">11</div><div class="t" style="left:284.4px;top:401.30px;line-height:7px;white-space:pre">11</div><div class="t" style="left:321.6px;top:401.30px;line-height:7px;white-space:pre">XQVVMI</div><div class="t" style="left:354px;top:401.30px;line-height:7px;white-space:pre">KRPGDBCQJH</div><div class="t" style="left:397px;top:401.30px;line-height:7px;white-space:pre">2415449050 Dell Way</div><div class="t" style="left:503.5px;top:401.30px;line-height:7px;white-space:pre">ICLYPGR</div><div class="t" style="left:535px;top:401.30px;line-height:7px;white-space:pre">PA</div><div class="t" style="left:564.4px;top:401.30px;line-height:7px;white-space:pre">53868</div><div class="t" style="left:594.4px;top:401.30px;line-height:7px;white-space:pre">US</div><div class="t" style="left:624px;top:401.30px;line-height:7px;white-space:pre">1</div><div class="t" style="left:654px;top:401.30px;line-height:7px;white-space:pre">KRPGDBCQJH@dell.com</div><div class="t" style="left:729.4px;top:401.30px;line-height:7px;white-space:pre">2415449050</div><div class="t" style="left:772px;top:401.30px;line-height:7px;white-space:pre">5</div><div class="a" style="left:248px;top:412.24px;width:533.5px;height:16.67px;background:#edf1f6"></div><div class="t sans" style="left:254.6px;top:416.97px;font-size:6.8px;line-height:7px;font-weight:bold;color:#25272c">12</div><div class="t" style="left:284.4px;top:417.97px;line-height:7px;white-space:pre">12</div><div class="t" style="left:321.6px;top:417.97px;line-height:7px;white-space:pre">KGISQZ</div><div class="t" style="left:354px;top:417.97px;line-height:7px;white-space:pre">IXDKAUUHCW</div><div class="t" style="left:397px;top:417.97px;line-height:7px;white-space:pre">1896033667 Dell Way</div><div class="t" style="left:503.5px;top:417.97px;line-height:7px;white-space:pre">SBLZSFM</div><div class="t" style="left:535px;top:417.97px;line-height:7px;white-space:pre">UT</div><div class="t" style="left:564.4px;top:417.97px;line-height:7px;white-space:pre">18452</div><div class="t" style="left:594.4px;top:417.97px;line-height:7px;white-space:pre">US</div><div class="t" style="left:624px;top:417.97px;line-height:7px;white-space:pre">1</div><div class="t" style="left:654px;top:417.97px;line-height:7px;white-space:pre">IXDKAUUHCW@dell.com</div><div class="t" style="left:729.4px;top:417.97px;line-height:7px;white-space:pre">1896033667</div><div class="t" style="left:772px;top:417.97px;line-height:7px;white-space:pre">2</div><div class="t sans" style="left:254.6px;top:433.64px;font-size:6.8px;line-height:7px;font-weight:bold;color:#25272c">13</div><div class="t" style="left:284.4px;top:434.64px;line-height:7px;white-space:pre">13</div><div class="t" style="left:321.6px;top:434.64px;line-height:7px;white-space:pre">LURLDP</div><div class="t" style="left:354px;top:434.64px;line-height:7px;white-space:pre">PNPJHXMEPN</div><div class="t" style="left:397px;top:434.64px;line-height:7px;white-space:pre">3029418206 Dell Way</div><div class="t" style="left:503.5px;top:434.64px;line-height:7px;white-space:pre">QPGVBCY</div><div class="t" style="left:535px;top:434.64px;line-height:7px;white-space:pre">DE</div><div class="t" style="left:564.4px;top:434.64px;line-height:7px;white-space:pre">53356</div><div class="t" style="left:594.4px;top:434.64px;line-height:7px;white-space:pre">US</div><div class="t" style="left:624px;top:434.64px;line-height:7px;white-space:pre">1</div><div class="t" style="left:654px;top:434.64px;line-height:7px;white-space:pre">PNPJHXMEPN@dell.com</div><div class="t" style="left:729.4px;top:434.64px;line-height:7px;white-space:pre">3029418206</div><div class="t" style="left:772px;top:434.64px;line-height:7px;white-space:pre">1</div></div>
<div class="a" style="left:782.3px;top:216px;width:3.3px;height:62px;background:#c6c9ce"></div>
<svg style="left:773px;top:429px" width="22" height="22"><circle cx="10.7" cy="10.3" r="10" fill="#1b5eb0"/><circle cx="10.7" cy="5.8" r="1.4" fill="#fff"/><path d="M8.6 8.6H11.6V13.8H12.8V15.3H8.6V13.8H9.9V10.1H8.6Z" fill="#fff"/></svg>
<div class="a" style="left:400.2px;top:450.6px;width:29.3px;height:6px;background:#6c7387;border-radius:2px"></div>
<div class="a" style="left:414px;top:452.7px;width:2.2px;height:2.2px;background:#fff;border-radius:50%"></div></body></html>
